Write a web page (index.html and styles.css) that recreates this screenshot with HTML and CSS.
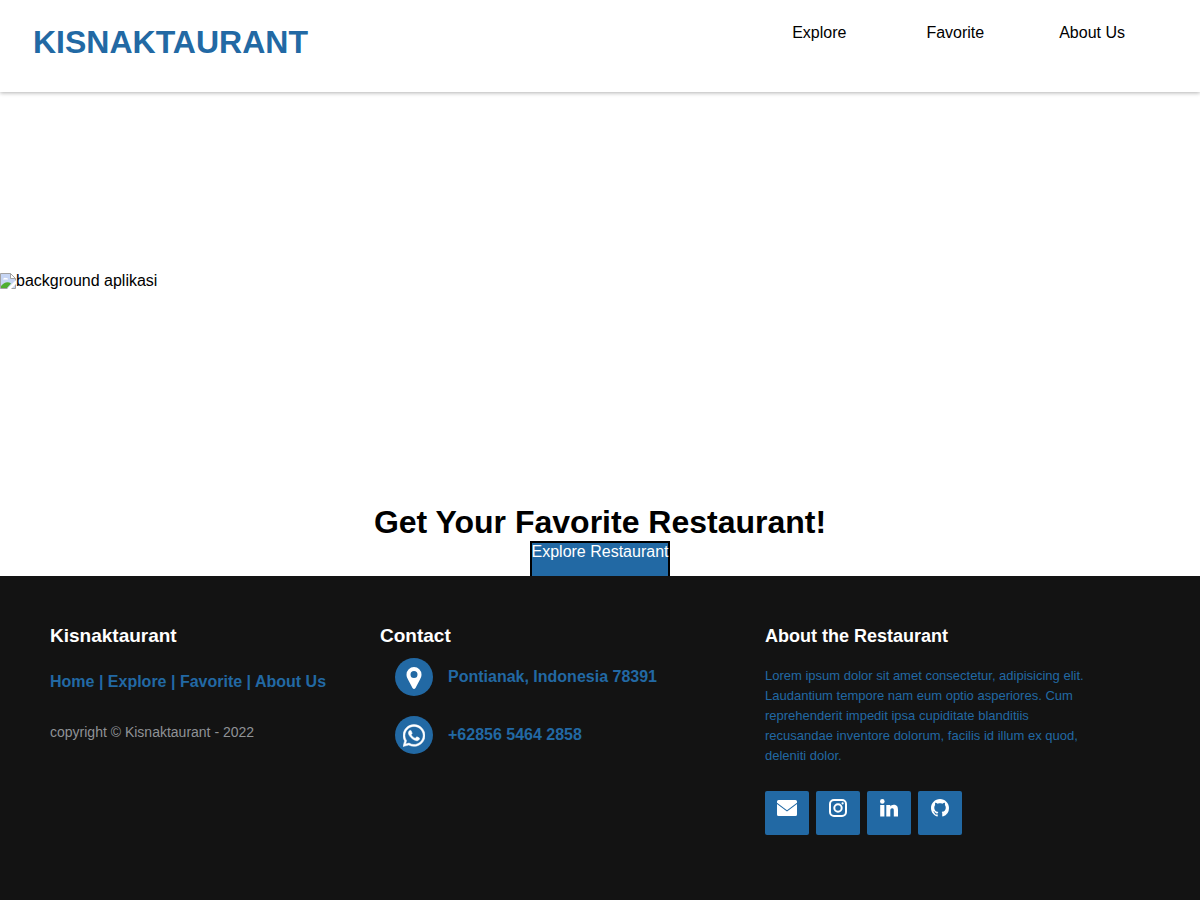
FILE: index.html
```html
<!DOCTYPE html>
<html lang="en">
<head>
<meta charset="utf-8">
<meta name="viewport" content="width=device-width, initial-scale=1">
<title>Kisnaktaurant</title>
<link rel="stylesheet" href="styles.css">
</head>
<body>
<header class="app-bar">
  <h1 class="brand">KISNAKTAURANT</h1>
  <nav class="nav">
    <a href="#explore">Explore</a>
    <a href="#favorite">Favorite</a>
    <a href="#about">About Us</a>
  </nav>
</header>
<main>
  <div class="hero">
    <svg class="missing" viewBox="0 0 16 16" aria-hidden="true">
      <path d="M.5.5h10l5 5v10H.5z" fill="#c6d5f4" stroke="#a3a3a3"/>
      <path d="M10.500.5v5h5z" fill="#fff" stroke="#a3a3a3"/>
      <path d="M3 6.500a2 2 0 0 1 3-1.500 1.500 1.500 0 0 1 2 1.500z" fill="#fff"/>
      <path d="M1 15v-2C4 9 8 8 11 10.500L7 15z" fill="#4fae31"/>
      <path d="M7 16 16 7v4l-5 5z" fill="#fff"/>
    </svg>
    <span>background aplikasi</span>
  </div>
  <section class="intro">
    <h2 class="intro-title">Get Your Favorite Restaurant!</h2>
    <a class="cta" href="#explore">Explore Restaurant</a>
  </section>
</main>
<footer class="footer">
  <section class="col-brand">
    <h3 class="title">Kisnaktaurant</h3>
    <p class="links"><a href="#home">Home</a> | <a href="#explore">Explore</a> | <a href="#favorite">Favorite</a> | <a href="#about">About Us</a></p>
    <p class="copyright">copyright © Kisnaktaurant - 2022</p>
  </section>
  <section class="col-contact">
    <h3 class="title">Contact</h3>
    <div class="contact">
      <span class="disc"><svg viewBox="0 -1 16 24" width="16" height="24" aria-hidden="true"><path fill="#fff" fill-rule="evenodd" transform="translate(0 1)" d="M8 0a7.500 7.500 0 0 1 7.500 7.500c0 2-.7 3.400-1.500 5l-4.500 8.600q-1.500 1.800-3 0L2 12.500c-.8-1.600-1.500-3-1.500-5A7.500 7.500 0 0 1 8 0zm0 4a3.500 3.500 0 1 0 0 7 3.500 3.500 0 0 0 0-7z"/></svg></span>
      <span>Pontianak, Indonesia 78391</span>
    </div>
    <div class="contact">
      <span class="disc"><svg viewBox="0 0 448 489" width="22" height="24" aria-hidden="true"><path fill="#fff" stroke="#fff" stroke-width="10" d="M380.900 97.100C339 55.100 283.200 32 223.900 32c-122.400 0-222 99.600-222 222 0 39.100 10.200 77.300 29.600 111L0 480l117.700-30.900c32.400 17.700 68.900 27 106.100 27h.1c122.300 0 224.100-99.600 224.100-222 0-59.300-25.200-115-67.100-157zm-157 341.600c-33.200 0-65.700-8.900-94-25.700l-6.700-4-69.800 18.300L72 359.200l-4.400-7c-18.500-29.400-28.200-63.300-28.200-98.200 0-101.700 82.800-184.500 184.600-184.500 49.300 0 95.600 19.200 130.400 54.100 34.800 34.900 56.200 81.200 56.100 130.500 0 101.800-84.900 184.600-186.600 184.600zm101.200-138.200c-5.500-2.800-32.800-16.200-37.900-18-5.100-1.900-8.800-2.800-12.500 2.800-3.700 5.600-14.300 18-17.600 21.800-3.200 3.700-6.500 4.200-12 1.400-32.600-16.300-54-29.100-75.500-66-5.700-9.800 5.700-9.100 16.300-30.300 1.800-3.700.9-6.900-.5-9.700-1.400-2.800-12.500-30.100-17.100-41.200-4.500-10.800-9.100-9.300-12.500-9.500-3.200-.2-6.900-.2-10.600-.2-3.700 0-9.700 1.400-14.800 6.900-5.100 5.600-19.400 19-19.400 46.300 0 27.300 19.900 53.700 22.600 57.400 2.800 3.700 39.100 59.700 94.800 83.800 35.200 15.200 49 16.500 66.600 13.900 10.700-1.600 32.800-13.400 37.400-26.400 4.600-13 4.600-24.100 3.200-26.400-1.300-2.500-5-3.900-10.500-6.600z"/></svg></span>
      <span>+62856 5464 2858</span>
    </div>
  </section>
  <section class="col-about">
    <h3 class="about-title">About the Restaurant</h3>
    <p class="about-text">Lorem ipsum dolor sit amet consectetur, adipisicing elit. Laudantium tempore nam eum optio asperiores. Cum reprehenderit impedit ipsa cupiditate blanditiis recusandae inventore dolorum, facilis id illum ex quod, deleniti dolor.</p>
    <div class="social">
      <a href="#email" aria-label="Email"><svg viewBox="0 0 22 18" width="22" height="18" aria-hidden="true"><path fill="#fff" d="M2.500 1h17Q21 1 21 2.500v1.300L11 11.300 1 3.800V2.500Q1 1 2.500 1zM1 5l10 7.500L21 5v10.500q0 1.500-1.500 1.500h-17Q1 17 1 15.500z"/></svg></a>
      <a href="#instagram" aria-label="Instagram"><svg viewBox="0 0 18 18" width="18" height="18" fill="none" stroke="#fff" stroke-width="2" aria-hidden="true"><rect x="1" y="1" width="16" height="16" rx="4"/><circle cx="9" cy="9" r="3.700"/><circle cx="13.600" cy="4.400" r="1.100" fill="#fff" stroke="none"/></svg></a>
      <a href="#linkedin" aria-label="LinkedIn"><svg viewBox="0 0 18 18" width="18" height="18" fill="#fff" aria-hidden="true"><circle cx="2.300" cy="2.400" r="2.300"/><path d="M.2 6h4.200v11.400H.2zM6.300 6h4v1.600C11 6.400 12 5.700 13.700 5.700c3.600 0 4.300 2.300 4.300 5.500v6.200h-4.200v-5.500c0-1.500 0-2.700-1.600-2.700s-1.900 1.200-1.900 2.700v5.500h-4z"/></svg></a>
      <a href="#github" aria-label="GitHub"><svg viewBox="0 0 16 16" width="18" height="18" aria-hidden="true"><path fill="#fff" d="M8 0C3.580 0 0 3.580 0 8c0 3.540 2.290 6.530 5.470 7.590.4.070.55-.17.55-.38 0-.19-.01-.82-.01-1.490-2.010.37-2.530-.49-2.690-.94-.09-.23-.48-.94-.82-1.130-.28-.15-.68-.52-.01-.53.63-.01 1.080.58 1.230.82.72 1.210 1.870.87 2.330.66.07-.52.28-.87.51-1.070-1.780-.2-3.640-.89-3.640-3.950 0-.87.31-1.590.82-2.150-.08-.2-.36-1.020.08-2.120 0 0 .67-.21 2.200.82.64-.18 1.320-.27 2-.27s1.360.09 2 .27c1.530-1.040 2.200-.82 2.200-.82.44 1.100.16 1.920.08 2.120.51.56.82 1.270.82 2.150 0 3.070-1.870 3.750-3.650 3.950.29.25.54.73.54 1.480 0 1.070-.01 1.930-.01 2.200 0 .21.15.46.55.38A8.010 8.010 0 0 0 16 8c0-4.420-3.580-8-8-8z"/></svg></a>
    </div>
  </section>
</footer>
</body>
</html>
```
FILE: styles.css
```css
* { box-sizing: border-box; margin: 0; padding: 0; }

body {
  min-height: 100vh;
  display: flex;
  flex-direction: column;
  background: #fff;
  color: #000;
  font: 16px/18px "Liberation Sans", Arial, sans-serif;
}

a { color: inherit; text-decoration: none; }
svg { display: block; }

.app-bar {
  display: flex;
  justify-content: space-between;
  padding: 24px 75px 32px 33px;
  box-shadow: 0 1px 4px rgba(0, 0, 0, 0.3);
}

.brand { color: #2269a4; font-size: 32px; line-height: 36px; }
.nav { display: flex; }
.nav a + a { margin-left: 75px; }
.nav a:nth-child(2) { margin-left: 80px; }

.hero { display: flex; height: 378px; align-items: center; }
.missing { width: 16px; height: 16px; }

.intro { display: flex; flex-direction: column; align-items: center; padding-top: 34px; }
.intro-title { font-size: 32px; line-height: 37px; }
.cta {
  height: 35px;
  border: 2px solid #000;
  border-bottom: 0;
  background: #2269a4;
  color: #fff;
}

.footer {
  flex: 1;
  display: grid;
  grid-template-columns: 30% 35% 35%;
  padding: 50px;
  background: #131313;
}

.title, .about-title { color: #fff; font-size: 18px; line-height: 20px; }
.title { font-size: 19px; }

.links { margin-top: 26px; color: #2269a4; font-weight: bold; line-height: 20px; }
.copyright { margin-top: 30px; color: #8f9296; font-size: 14px; line-height: 20px; }

.contact {
  display: flex;
  gap: 15px;
  margin: 12px 15px 20px;
  color: #2269a4;
  font-weight: bold;
  line-height: 38px;
}
.contact + .contact { margin-top: 0; }
.disc {
  display: flex;
  width: 38px;
  height: 38px;
  align-items: center;
  justify-content: center;
  border-radius: 50%;
  background: #2269a4;
}

.about-text { max-width: 330px; margin-top: 20px; color: #2269a4; font-size: 13px; line-height: 20px; }
.social { display: flex; gap: 7px; margin-top: 25px; }
.social a {
  display: flex;
  width: 44px;
  height: 44px;
  justify-content: center;
  padding-top: 8px;
  border-radius: 2px;
  background: #2269a4;
}
```
